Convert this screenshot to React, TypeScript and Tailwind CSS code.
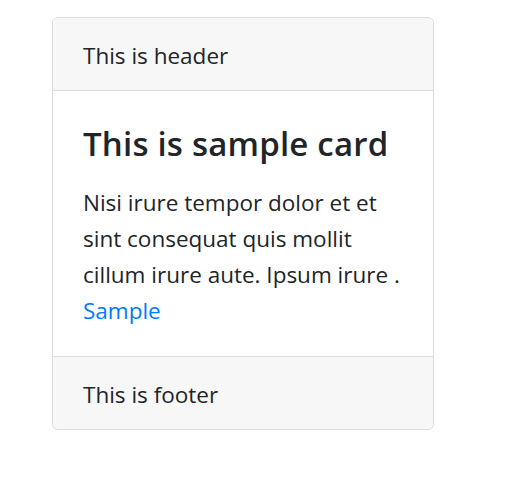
import React from "react";

const App = () => {
  return (
    <div className="min-h-screen bg-white pt-[17px] pl-[52px] font-['Open_Sans',sans-serif] text-[#212529]">
      <div className="w-[382px] rounded-[6px] border border-[#dcdcdc] bg-white">
        <div className="rounded-t-[6px] border-b border-[#dcdcdc] bg-[#f7f7f7] px-[30px] pt-[20px] pb-[16px] text-[22.5px] leading-[36px]">
          This is header
        </div>
        <div className="px-[30px] pt-[35px] pb-[27px]">
          <h5 className="mb-[23px] text-[33px] font-semibold leading-[36px] tracking-[0.2px]">
            This is sample card
          </h5>
          <p className="text-[22.5px] leading-[36px] whitespace-nowrap">
            <span className="block">Nisi irure tempor dolor et et</span>
            <span className="block">sint consequat quis mollit</span>
            <span className="block">cillum irure aute. Ipsum irure .</span>
            <a href="#" className="text-[#007bff]">
              Sample
            </a>
          </p>
        </div>
        <div className="rounded-b-[6px] border-t border-[#dcdcdc] bg-[#f7f7f7] px-[30px] pt-[20px] pb-[16px] text-[22.5px] leading-[36px]">
          This is footer
        </div>
      </div>
    </div>
  );
};

export default App;
